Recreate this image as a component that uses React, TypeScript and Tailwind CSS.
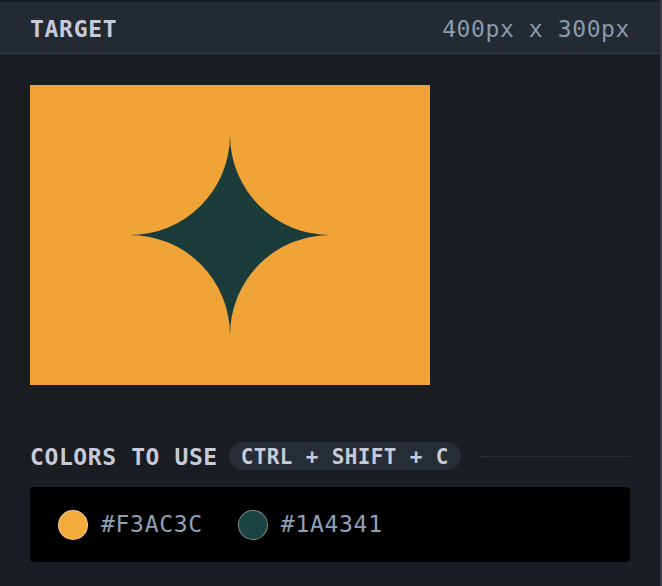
import React from "react";

const mono = { fontFamily: '"DejaVu Sans Mono", "Liberation Mono", monospace' };

function Swatch({ color, ring }: { color: string; ring: string }) {
  return (
    <div className="flex items-center gap-[13px]">
      <span className={`block h-[30px] w-[30px] rounded-full border ${ring}`} style={{ backgroundColor: color }} />
      <span className="text-[23px] leading-none tracking-[0.7px] text-[#8ea1b6]">{color.toUpperCase()}</span>
    </div>
  );
}

export default function App() {
  return (
    <div className="flex h-[586px] w-[662px] flex-col border-r-2 border-[#3a3f45] bg-[#1a1d21] pt-0.5" style={mono}>
      <div className="flex h-[52px] items-center justify-between border-b border-[#343c45] bg-[#232a31] px-[30px] pt-[3px]">
        <h1 className="text-[23px] font-bold leading-none tracking-[0.7px] text-[#c6cad9]">TARGET</h1>
        <span className="text-[23px] leading-none tracking-[0.6px] text-[#8a9bb0]">400px x 300px</span>
      </div>

      <div className="flex flex-col px-[30px]">
        <div className="mt-[31px] flex h-[300px] w-[400px] items-center justify-center bg-[#f0a336]">
          <svg width="200" height="200" viewBox="0 0 200 200">
            <path
              d="M100 0 A100 100 0 0 0 200 100 A100 100 0 0 0 100 200 A100 100 0 0 0 0 100 A100 100 0 0 0 100 0 Z"
              fill="#1b3c3b"
            />
          </svg>
        </div>

        <div className="mt-[57px] flex h-[28px] items-center">
          <h2 className="pt-[2px] text-[23px] font-bold leading-none tracking-[0.6px] text-[#c6cad9]">COLORS TO USE</h2>
          <span className="ml-[11px] flex h-[28px] items-center rounded-full bg-[#262d35] px-3 pt-[2px] text-[21px] font-bold leading-none tracking-[0.35px] text-[#c6cad9]">
            CTRL + SHIFT + C
          </span>
          <div className="ml-5 h-px flex-1 bg-[#2c3138]" />
        </div>

        <div className="mt-[17px] flex h-[75px] items-center gap-[35px] rounded bg-black pl-7">
          <Swatch color="#f3ac3c" ring="border-white/40" />
          <Swatch color="#1a4341" ring="border-white/40" />
        </div>
      </div>
    </div>
  );
}
